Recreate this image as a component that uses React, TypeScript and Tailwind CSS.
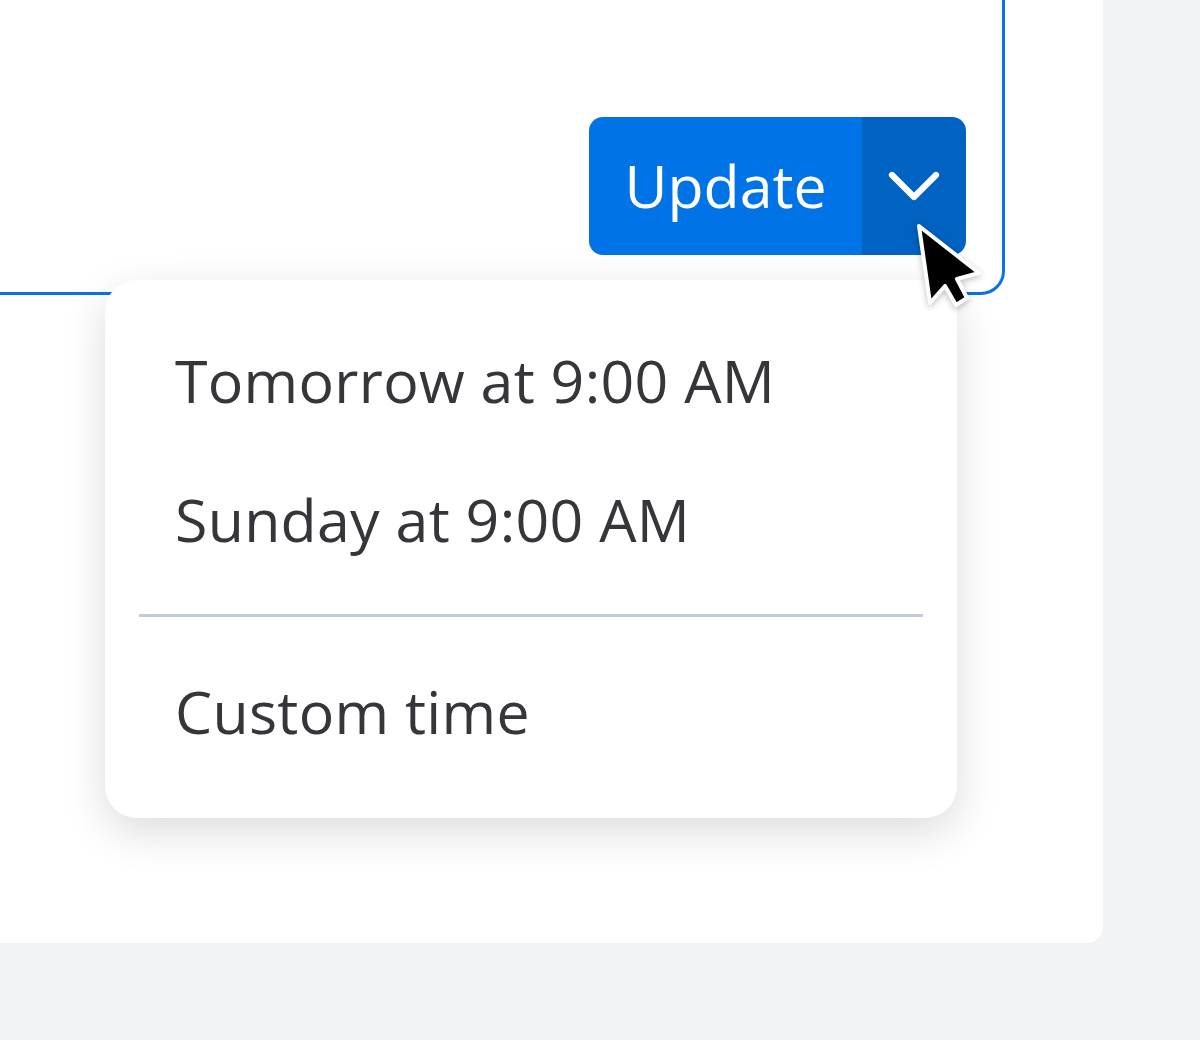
import { ChevronDown } from "lucide-react";

const font = { fontFamily: '"Open Sans", "Roboto", sans-serif' };

function Cursor() {
  return (
    <svg
      className="absolute left-[900px] top-[210px] drop-shadow-[0_2px_3px_rgba(0,0,0,0.25)]"
      width="100"
      height="110"
      viewBox="900 210 100 110"
    >
      <path
        d="M919 226 L979 273 L957 279 L967 298 L956 305 L945 286 L930 303 Z"
        fill="#000"
        stroke="#fff"
        strokeWidth="4"
        strokeLinejoin="round"
      />
    </svg>
  );
}

function MenuItem({ label }: { label: string }) {
  return <div className="px-[70px] text-[59px] leading-[139px] text-[#35363a] tracking-[0.3px]">{label}</div>;
}

export default function App() {
  return (
    <div className="w-[1200px] h-[1040px] bg-[#f1f3f4] overflow-hidden" style={font}>
      <div className="relative flex flex-col w-[1103px] h-[943px] bg-white rounded-br-[16px]">
        <div className="-mt-[10px] -ml-[10px] w-[1015px] h-[305px] border-[3px] border-[#0b72e7] rounded-br-[24px] flex items-start justify-end pt-[124px] pr-[36px]">
          <div className="flex h-[138px] rounded-[14px] overflow-hidden">
            <button className="w-[273px] bg-[#0073e6] text-white text-[59px] flex items-center justify-center pb-[2px]">
              Update
            </button>
            <button className="w-[104px] bg-[#0062c1] text-white flex items-center justify-center">
              <ChevronDown size={88} strokeWidth={1.7} />
            </button>
          </div>
        </div>
        <div className="absolute left-[105px] top-[280px] w-[852px] h-[538px] bg-white rounded-[32px] shadow-[0_14px_44px_rgba(0,0,0,0.14)] pt-[31px]">
          <MenuItem label="Tomorrow at 9:00 AM" />
          <MenuItem label="Sunday at 9:00 AM" />
          <div className="mx-[34px] mt-[25px] h-[3px] bg-[#c5cad8]" />
          <div className="pt-[25px]">
            <MenuItem label="Custom time" />
          </div>
        </div>
        <Cursor />
      </div>
    </div>
  );
}
